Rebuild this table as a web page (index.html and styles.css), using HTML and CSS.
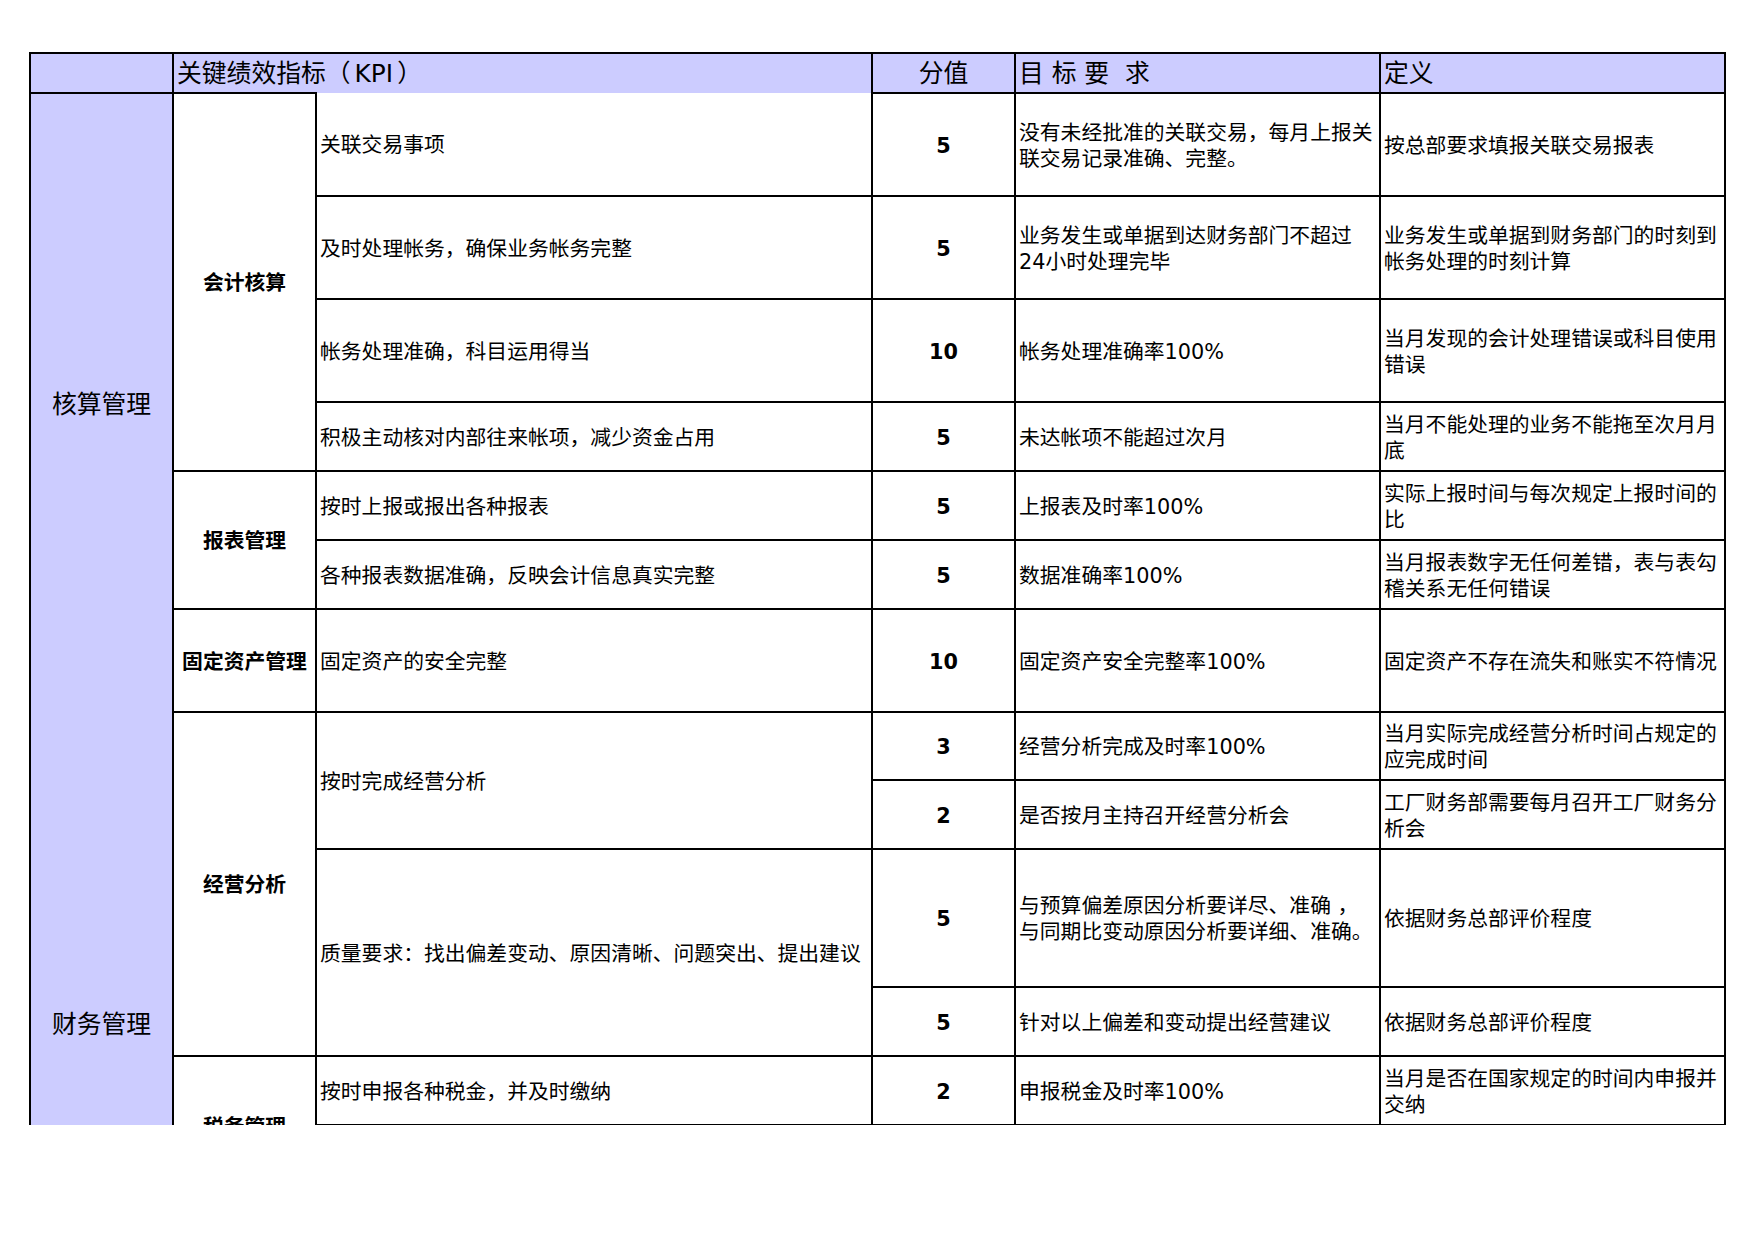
FILE: index.html
```html
<!DOCTYPE html>
<html lang="zh-CN">
<head>
<meta charset="utf-8">
<title>关键绩效指标（KPI）</title>
<link rel="stylesheet" href="styles.css">
</head>
<body>
<div class="page">
<table class="kpi-table">
  <colgroup>
    <col class="w-cat">
    <col class="w-sub">
    <col class="w-kpi">
    <col class="w-score">
    <col class="w-goal">
    <col class="w-def">
  </colgroup>
  <thead>
    <tr class="h40">
      <th class="head"></th>
      <th class="head left no-bottom" colspan="2">关键绩效指标（<span class="abbr">KPI</span>）</th>
      <th class="head center">分值</th>
      <th class="head left spaced">目 标 要  求</th>
      <th class="head left">定义</th>
    </tr>
  </thead>
  <tbody>
    <tr class="h103">
      <td class="cat no-bottom" rowspan="7">核算管理</td>
      <td class="sub" rowspan="4">会计核算</td>
      <td class="txt no-top">关联交易事项</td>
      <td class="score">5</td>
      <td class="txt">没有未经批准的关联交易，每月上报关<br>联交易记录准确、完整。</td>
      <td class="txt">按总部要求填报关联交易报表</td>
    </tr>
    <tr class="h103">
      <td class="txt">及时处理帐务，确保业务帐务完整</td>
      <td class="score">5</td>
      <td class="txt">业务发生或单据到达财务部门不超过<br>24小时处理完毕</td>
      <td class="txt">业务发生或单据到财务部门的时刻到<br>帐务处理的时刻计算</td>
    </tr>
    <tr class="h103">
      <td class="txt">帐务处理准确，科目运用得当</td>
      <td class="score">10</td>
      <td class="txt">帐务处理准确率100%</td>
      <td class="txt">当月发现的会计处理错误或科目使用<br>错误</td>
    </tr>
    <tr class="h69">
      <td class="txt">积极主动核对内部往来帐项，减少资金占用</td>
      <td class="score">5</td>
      <td class="txt">未达帐项不能超过次月</td>
      <td class="txt">当月不能处理的业务不能拖至次月月<br>底</td>
    </tr>
    <tr class="h69">
      <td class="sub" rowspan="2">报表管理</td>
      <td class="txt">按时上报或报出各种报表</td>
      <td class="score">5</td>
      <td class="txt">上报表及时率100%</td>
      <td class="txt">实际上报时间与每次规定上报时间的<br>比</td>
    </tr>
    <tr class="h69">
      <td class="txt">各种报表数据准确，反映会计信息真实完整</td>
      <td class="score">5</td>
      <td class="txt">数据准确率100%</td>
      <td class="txt">当月报表数字无任何差错，表与表勾<br>稽关系无任何错误</td>
    </tr>
    <tr class="h103">
      <td class="sub">固定资产管理</td>
      <td class="txt">固定资产的安全完整</td>
      <td class="score">10</td>
      <td class="txt">固定资产安全完整率100%</td>
      <td class="txt">固定资产不存在流失和账实不符情况</td>
    </tr>
    <tr class="h68">
      <td class="cat no-top" rowspan="7">财务管理</td>
      <td class="sub" rowspan="4">经营分析</td>
      <td class="txt" rowspan="2">按时完成经营分析</td>
      <td class="score">3</td>
      <td class="txt">经营分析完成及时率100%</td>
      <td class="txt">当月实际完成经营分析时间占规定的<br>应完成时间</td>
    </tr>
    <tr class="h69">
      <td class="score">2</td>
      <td class="txt">是否按月主持召开经营分析会</td>
      <td class="txt">工厂财务部需要每月召开工厂财务分<br>析会</td>
    </tr>
    <tr class="h138">
      <td class="txt" rowspan="2">质量要求：找出偏差变动、原因清晰、问题突出、提出建议</td>
      <td class="score">5</td>
      <td class="txt">与预算偏差原因分析要详尽、准确 ，<br>与同期比变动原因分析要详细、准确。</td>
      <td class="txt">依据财务总部评价程度</td>
    </tr>
    <tr class="h69">
      <td class="score">5</td>
      <td class="txt">针对以上偏差和变动提出经营建议</td>
      <td class="txt">依据财务总部评价程度</td>
    </tr>
    <tr class="h69">
      <td class="sub" rowspan="2">税务管理</td>
      <td class="txt">按时申报各种税金，并及时缴纳</td>
      <td class="score">2</td>
      <td class="txt">申报税金及时率100%</td>
      <td class="txt">当月是否在国家规定的时间内申报并<br>交纳</td>
    </tr>
    <tr class="h71">
      <td class="txt"></td>
      <td class="score"></td>
      <td class="txt"></td>
      <td class="txt"></td>
    </tr>
    <tr class="h138">
      <td class="sub"></td>
      <td class="txt"></td>
      <td class="score"></td>
      <td class="txt"></td>
      <td class="txt"></td>
    </tr>
  </tbody>
</table>
</div>
</body>
</html>
```
FILE: styles.css
```css
html, body {
  margin: 0;
  padding: 0;
  background: #ffffff;
}

body {
  font-family: "DejaVu Sans", "Noto Sans CJK SC", sans-serif;
  color: #000000;
}

.page {
  height: 1125px;
  overflow: hidden;
  padding-top: 52px;
  box-sizing: border-box;
}

.kpi-table {
  margin-left: 29px;
  width: 1695px;
  table-layout: fixed;
  border-collapse: collapse;
  font-size: 20.8px;
  line-height: 26px;
}

.w-cat { width: 143px; }
.w-sub { width: 143px; }
.w-kpi { width: 556px; }
.w-score { width: 143px; }
.w-goal { width: 365px; }
.w-def { width: 345px; }

.h40 { height: 40px; }
.h68 { height: 68px; }
.h69 { height: 69px; }
.h71 { height: 71px; }
.h103 { height: 103px; }
.h138 { height: 138px; }

.kpi-table th,
.kpi-table td {
  border: 2px solid #000000;
  padding: 2px 3px 0 3px;
  vertical-align: middle;
  white-space: nowrap;
  overflow: visible;
}

.kpi-table .head {
  background: #ccccff;
  font-size: 24.8px;
  font-weight: normal;
  padding-top: 2px;
}

.abbr {
  padding: 0 4px;
}

.left { text-align: left; }
.center { text-align: center; }
.kpi-table .spaced { white-space: pre; }

.kpi-table .cat {
  background: #ccccff;
  text-align: center;
  font-size: 24.8px;
  padding-top: 4px;
}

.sub {
  text-align: center;
  font-weight: bold;
}

.txt {
  text-align: left;
}

.score {
  text-align: center;
  font-weight: bold;
}

.kpi-table .no-bottom { border-bottom: none; }
.kpi-table .no-top { border-top: none; }
```
